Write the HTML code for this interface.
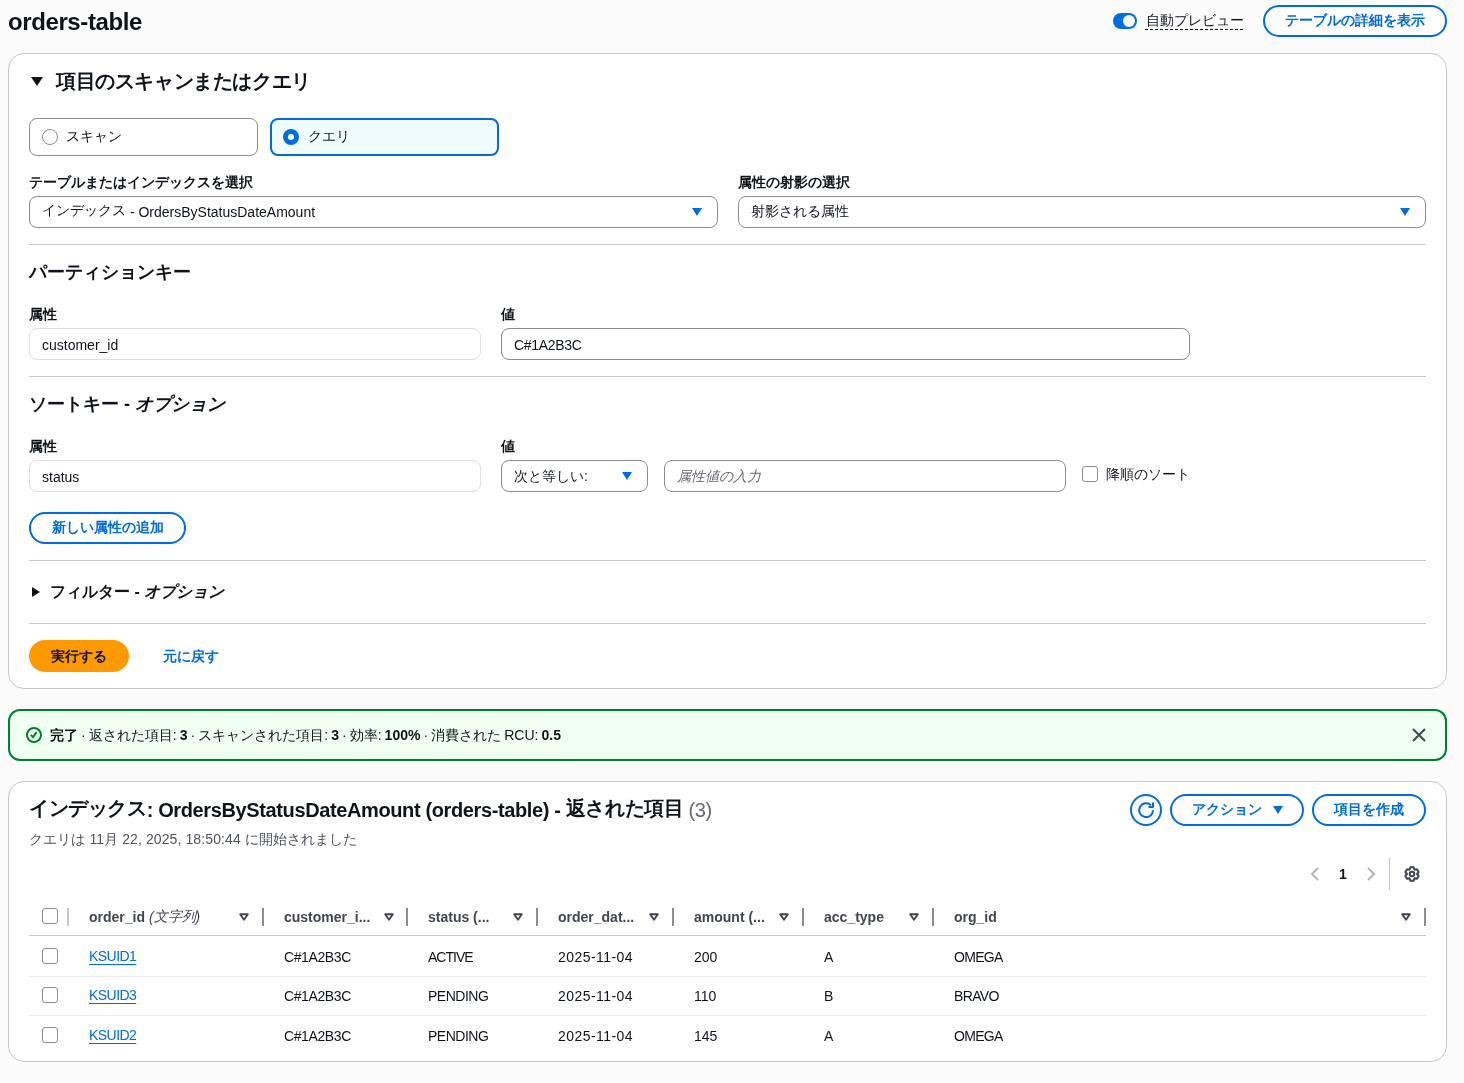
<!DOCTYPE html>
<html lang="ja"><head><meta charset="utf-8">
<style>
*{box-sizing:border-box;margin:0;padding:0}
html,body{width:1464px;height:1083px;overflow:hidden;background:#fbfbfc}
body{will-change:transform;position:relative;font-family:"Liberation Sans",sans-serif;font-size:14px;color:#0f141a;line-height:20px}
.a{position:absolute;white-space:nowrap}
.b{font-weight:bold}
.card{position:absolute;background:#fff;border:1px solid #c6c6cd;border-radius:16px}
.hr{position:absolute;height:1px;background:#c6c6cd}
.btn{position:absolute;border:2px solid #006ce0;border-radius:16px;color:#006ce0;font-weight:bold;text-align:center;background:#fff}
.inp{position:absolute;border:1px solid #8c8c94;border-radius:8px;background:#fff;height:32px}
.ro{border-color:#dedee3}
.tri{position:absolute;width:0;height:0;border-left:5px solid transparent;border-right:5px solid transparent;border-top:8px solid #006ce0}
.cb{position:absolute;width:16px;height:16px;border:1px solid #8c8c94;border-radius:3px;background:#fff}
.rz{position:absolute;width:2px;height:18px;background:#8c8c94}
.th{position:absolute;font-weight:bold;color:#424650;white-space:nowrap}
.st{position:absolute}
.td{position:absolute;white-space:nowrap}
.j{position:relative;top:-2px}.j2{position:relative;top:-2px}
.lnk{color:#006ce0;text-decoration:underline;text-underline-offset:3px}
</style></head><body>

<!-- page header -->
<div class="a b" style="left:8px;top:7px;font-size:24px;line-height:30px;letter-spacing:-0.4px">orders-table</div>
<div class="a" style="left:1113px;top:13px;width:24px;height:16px;border-radius:8px;background:#006ce0"></div>
<div class="a" style="left:1123px;top:15px;width:12px;height:12px;border-radius:6px;background:#fff"></div>
<div class="a" style="left:1146px;top:10px;line-height:20px">自動プレビュー</div><div class="a" style="left:1145px;top:29px;width:99px;height:1px;background:repeating-linear-gradient(90deg,#0f141a 0 3px,transparent 3px 5px)"></div>
<div class="btn" style="left:1263px;top:5px;width:184px;height:32px;line-height:26px">テーブルの詳細を表示</div>

<!-- card 1 -->
<div class="card" style="left:8px;top:53px;width:1439px;height:636px"></div>
<div class="a" style="left:31px;top:77px;width:0;height:0;border-left:6px solid transparent;border-right:6px solid transparent;border-top:9px solid #0f141a"></div>
<div class="a b" style="left:56px;top:69px;font-size:20px;line-height:24px;letter-spacing:-0.4px">項目のスキャンまたはクエリ</div>

<div class="a" style="left:29px;top:118px;width:229px;height:38px;border:1px solid #8c8c94;border-radius:8px"></div>
<div class="a" style="left:42px;top:129px;width:16px;height:16px;border:1px solid #8c8c94;border-radius:50%"></div>
<div class="a" style="left:66px;top:126px">スキャン</div>
<div class="a" style="left:270px;top:118px;width:229px;height:38px;border:2px solid #006ce0;border-radius:8px;background:#f0fbff"></div>
<div class="a" style="left:283px;top:129px;width:16px;height:16px;border:5px solid #006ce0;border-radius:50%;background:#fff"></div>
<div class="a" style="left:308px;top:126px">クエリ</div>

<div class="a b" style="left:29px;top:172px">テーブルまたはインデックスを選択</div>
<div class="inp" style="left:29px;top:196px;width:689px"></div>
<div class="a" style="left:42px;top:202px"><span class="j">インデックス</span> - OrdersByStatusDateAmount</div>
<div class="tri" style="left:692px;top:208px"></div>
<div class="a b" style="left:738px;top:172px">属性の射影の選択</div>
<div class="inp" style="left:738px;top:196px;width:688px"></div>
<div class="a" style="left:751px;top:201px">射影される属性</div>
<div class="tri" style="left:1400px;top:208px"></div>
<div class="hr" style="left:29px;top:244px;width:1397px"></div>

<div class="a b" style="left:29px;top:261px;font-size:18px;line-height:22px">パーティションキー</div>
<div class="a b" style="left:29px;top:304px">属性</div>
<div class="inp ro" style="left:29px;top:328px;width:452px"></div>
<div class="a" style="left:42px;top:335px">customer_id</div>
<div class="a b" style="left:501px;top:304px">値</div>
<div class="inp" style="left:501px;top:328px;width:689px"></div>
<div class="a" style="left:514px;top:335px;letter-spacing:-0.3px">C#1A2B3C</div>
<div class="hr" style="left:29px;top:376px;width:1397px"></div>

<div class="a b" style="left:29px;top:393px;font-size:18px;line-height:22px">ソートキー - <i>オプション</i></div>
<div class="a b" style="left:29px;top:436px">属性</div>
<div class="inp ro" style="left:29px;top:460px;width:452px"></div>
<div class="a" style="left:42px;top:467px">status</div>
<div class="a b" style="left:501px;top:436px">値</div>
<div class="inp" style="left:501px;top:460px;width:147px"></div>
<div class="a" style="left:514px;top:466px">次と等しい:</div>
<div class="tri" style="left:622px;top:472px"></div>
<div class="inp" style="left:664px;top:460px;width:402px"></div>
<div class="a" style="left:677px;top:466px;color:#656871;font-style:italic">属性値の入力</div>
<div class="cb" style="left:1082px;top:466px"></div>
<div class="a" style="left:1106px;top:464px">降順のソート</div>

<div class="btn" style="left:29px;top:512px;width:157px;height:32px;line-height:26px">新しい属性の追加</div>
<div class="hr" style="left:29px;top:560px;width:1397px"></div>

<div class="a" style="left:32px;top:587px;width:0;height:0;border-top:5px solid transparent;border-bottom:5px solid transparent;border-left:8px solid #0f141a"></div>
<div class="a b" style="left:50px;top:582px;font-size:16px;line-height:20px">フィルター - <i>オプション</i></div>
<div class="hr" style="left:29px;top:623px;width:1397px"></div>

<div class="a b" style="left:29px;top:640px;width:100px;height:32px;border-radius:16px;background:#ff9900;text-align:center;line-height:32px">実行する</div>
<div class="a b" style="left:163px;top:646px;color:#006ce0">元に戻す</div>

<!-- flash -->
<div class="a" style="left:8px;top:709px;width:1439px;height:52px;border:2px solid #00802f;border-radius:12px;background:#effff1"></div>
<svg class="a" style="left:26px;top:727px" width="16" height="16" viewBox="0 0 16 16"><circle cx="8" cy="8" r="7" fill="none" stroke="#00802f" stroke-width="2"/><path d="M4.8 7.9L7 10.1 10.6 5.2" fill="none" stroke="#00802f" stroke-width="2"/></svg>
<div class="a" style="left:50px;top:725px;word-spacing:-0.85px"><b>完了</b> · 返された項目: <b>3</b> · スキャンされた項目: <b>3</b> · 効率: <b>100%</b> · 消費された RCU: <b>0.5</b></div>
<svg class="a" style="left:1411px;top:727px" width="16" height="16" viewBox="0 0 16 16"><path d="M2 2l12 12M14 2L2 14" stroke="#424650" stroke-width="2"/></svg>

<!-- card 2 -->
<div class="card" style="left:8px;top:781px;width:1439px;height:281px"></div>
<div class="a b" style="left:29px;top:798px;font-size:20px;line-height:24px;letter-spacing:-0.38px"><span class="j2">インデックス</span>: OrdersByStatusDateAmount (orders-table) - <span class="j2">返された項目</span> <span style="font-weight:normal;color:#656871">(3)</span></div>
<div class="a" style="left:29px;top:829px;color:#4f535c;letter-spacing:0.1px">クエリは 11月 22, 2025, 18:50:44 に開始されました</div>

<div class="btn" style="left:1130px;top:794px;width:32px;height:32px"></div>
<svg class="a" style="left:1138px;top:802px" width="16" height="16" viewBox="0 0 16 16"><path d="M15 8.3A6.9 6.9 0 1 1 12.9 3.2" fill="none" stroke="#006ce0" stroke-width="2"/><path d="M15 0.5V5H10.5" fill="none" stroke="#006ce0" stroke-width="2" stroke-linejoin="round"/></svg>
<div class="btn" style="left:1170px;top:794px;width:134px;height:32px;line-height:26px;text-align:left;padding-left:20px">アクション</div>
<div class="tri" style="left:1273px;top:806px"></div>
<div class="btn" style="left:1312px;top:794px;width:114px;height:32px;line-height:26px">項目を作成</div>

<svg class="a" style="left:1308px;top:866px" width="14" height="16" viewBox="0 0 14 16"><path d="M10 2L4 8l6 6" fill="none" stroke="#b4b4bb" stroke-width="2"/></svg>
<div class="a b" style="left:1339px;top:864px">1</div>
<svg class="a" style="left:1364px;top:866px" width="14" height="16" viewBox="0 0 14 16"><path d="M4 2l6 6-6 6" fill="none" stroke="#b4b4bb" stroke-width="2"/></svg>
<div class="a" style="left:1389px;top:858px;width:1px;height:32px;background:#c6c6cd"></div>
<svg class="a" style="left:1400px;top:862px" width="24" height="24" viewBox="0 0 24 24"><path d="M10.33 5.30 L13.67 5.30 L14.50 7.67 L16.96 7.21 L18.63 10.10 L17.00 12.00 L18.63 13.90 L16.96 16.79 L14.50 16.33 L13.67 18.70 L10.33 18.70 L9.50 16.33 L7.04 16.79 L5.37 13.90 L7.00 12.00 L5.37 10.10 L7.04 7.21 L9.50 7.67Z" fill="none" stroke="#424650" stroke-width="2" stroke-linejoin="round"/><circle cx="12" cy="12" r="2.3" fill="none" stroke="#424650" stroke-width="2"/></svg>

<!-- table -->
<div class="cb" style="left:42px;top:908px"></div>
<div class="a" style="left:67px;top:908px;width:2px;height:18px;background:#c6c6cd"></div>
<div class="th" style="left:89px;top:907px">order_id <i style="font-weight:normal">(<span class="j" style="top:-1px">文字列</span>)</i></div>
<div class="th" style="left:284px;top:907px">customer_i...</div>
<div class="th" style="left:428px;top:907px">status (...</div>
<div class="th" style="left:558px;top:907px">order_dat...</div>
<div class="th" style="left:694px;top:907px">amount (...</div>
<div class="th" style="left:824px;top:907px">acc_type</div>
<div class="th" style="left:954px;top:907px">org_id</div>
<svg class="a" style="left:238px;top:912px" width="12" height="10" viewBox="0 0 12 10"><path d="M2.2 2.2h7.6L6 7.8z" fill="none" stroke="#424650" stroke-width="1.9" stroke-linejoin="round"/></svg>
<svg class="a" style="left:383px;top:912px" width="12" height="10" viewBox="0 0 12 10"><path d="M2.2 2.2h7.6L6 7.8z" fill="none" stroke="#424650" stroke-width="1.9" stroke-linejoin="round"/></svg>
<svg class="a" style="left:512px;top:912px" width="12" height="10" viewBox="0 0 12 10"><path d="M2.2 2.2h7.6L6 7.8z" fill="none" stroke="#424650" stroke-width="1.9" stroke-linejoin="round"/></svg>
<svg class="a" style="left:648px;top:912px" width="12" height="10" viewBox="0 0 12 10"><path d="M2.2 2.2h7.6L6 7.8z" fill="none" stroke="#424650" stroke-width="1.9" stroke-linejoin="round"/></svg>
<svg class="a" style="left:778px;top:912px" width="12" height="10" viewBox="0 0 12 10"><path d="M2.2 2.2h7.6L6 7.8z" fill="none" stroke="#424650" stroke-width="1.9" stroke-linejoin="round"/></svg>
<svg class="a" style="left:908px;top:912px" width="12" height="10" viewBox="0 0 12 10"><path d="M2.2 2.2h7.6L6 7.8z" fill="none" stroke="#424650" stroke-width="1.9" stroke-linejoin="round"/></svg>
<svg class="a" style="left:1400px;top:912px" width="12" height="10" viewBox="0 0 12 10"><path d="M2.2 2.2h7.6L6 7.8z" fill="none" stroke="#424650" stroke-width="1.9" stroke-linejoin="round"/></svg>
<div class="rz" style="left:262px;top:908px"></div>
<div class="rz" style="left:406px;top:908px"></div>
<div class="rz" style="left:536px;top:908px"></div>
<div class="rz" style="left:672px;top:908px"></div>
<div class="rz" style="left:802px;top:908px"></div>
<div class="rz" style="left:932px;top:908px"></div>
<div class="rz" style="left:1424px;top:908px"></div>
<div class="hr" style="left:29px;top:935px;width:1397px"></div>

<div class="cb" style="left:42px;top:948px"></div>
<div class="td lnk" style="left:89px;top:946px;letter-spacing:-0.55px">KSUID1</div>
<div class="td" style="left:284px;top:947px;letter-spacing:-0.4px">C#1A2B3C</div>
<div class="td" style="left:428px;top:947px;letter-spacing:-1.0px">ACTIVE</div>
<div class="td" style="left:558px;top:947px;letter-spacing:0.45px">2025-11-04</div>
<div class="td" style="left:694px;top:947px">200</div>
<div class="td" style="left:824px;top:947px">A</div>
<div class="td" style="left:954px;top:947px;letter-spacing:-0.7px">OMEGA</div>
<div class="hr" style="left:29px;top:976px;width:1397px;background:#ebebf0"></div>

<div class="cb" style="left:42px;top:987px"></div>
<div class="td lnk" style="left:89px;top:985px;letter-spacing:-0.55px">KSUID3</div>
<div class="td" style="left:284px;top:986px;letter-spacing:-0.4px">C#1A2B3C</div>
<div class="td" style="left:428px;top:986px;letter-spacing:-0.5px">PENDING</div>
<div class="td" style="left:558px;top:986px;letter-spacing:0.45px">2025-11-04</div>
<div class="td" style="left:694px;top:986px">110</div>
<div class="td" style="left:824px;top:986px">B</div>
<div class="td" style="left:954px;top:986px;letter-spacing:-0.65px">BRAVO</div>
<div class="hr" style="left:29px;top:1015px;width:1397px;background:#ebebf0"></div>

<div class="cb" style="left:42px;top:1027px"></div>
<div class="td lnk" style="left:89px;top:1025px;letter-spacing:-0.55px">KSUID2</div>
<div class="td" style="left:284px;top:1026px;letter-spacing:-0.4px">C#1A2B3C</div>
<div class="td" style="left:428px;top:1026px;letter-spacing:-0.5px">PENDING</div>
<div class="td" style="left:558px;top:1026px;letter-spacing:0.45px">2025-11-04</div>
<div class="td" style="left:694px;top:1026px">145</div>
<div class="td" style="left:824px;top:1026px">A</div>
<div class="td" style="left:954px;top:1026px;letter-spacing:-0.7px">OMEGA</div>

</body></html>
